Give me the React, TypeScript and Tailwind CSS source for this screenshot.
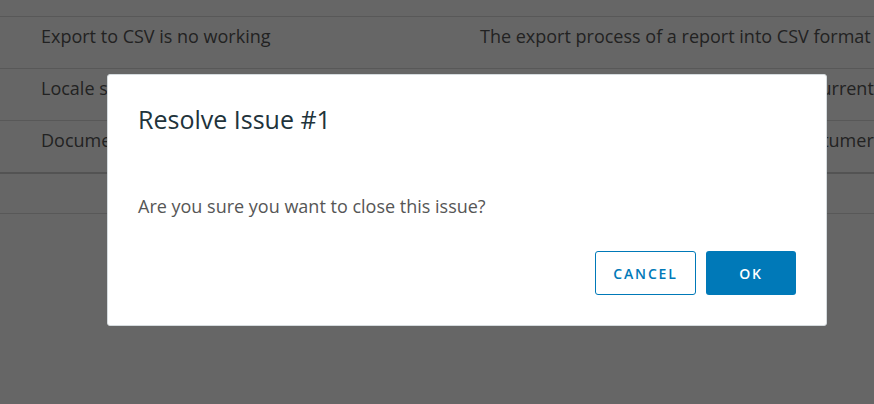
import React from "react";

const rows = [
  {
    title: "Export to CSV is no working",
    description: "The export process of a report into CSV format fails",
  },
  {
    title: "Locale settings are ignored",
    description: "Changing the locale doesn't update the current",
  },
  {
    title: "Documentation is missing",
    description: "There is no documentation for a new costumer portal",
  },
];

const App = () => {
  return (
    <div className="relative h-[404px] w-[874px] overflow-hidden bg-white font-['Open_Sans',sans-serif] text-[#565656]">
      {/* Issues table behind the dialog */}
      <div className="pt-[16px]">
        {rows.map((row) => (
          <div key={row.title} className="flex h-[52px] border-t border-[#dcdcdc] pt-[7px] text-[18px] leading-6">
            <div className="w-[480px] shrink-0 pl-[41px] whitespace-nowrap">{row.title}</div>
            <div className="whitespace-nowrap">{row.description}</div>
          </div>
        ))}
        <div className="h-[42px] border-t-2 border-b border-t-[#cfcfcf] border-b-[#dcdcdc]" />
      </div>

      {/* Backdrop + modal */}
      <div className="fixed inset-0 bg-black/60">
        <div className="ml-[107px] mt-[74px] flex h-[252px] w-[720px] flex-col rounded-[3px] border border-[#d5dbde] bg-white pl-[30px] pr-[30px] pb-[30px]">
          <h2 className="mt-[28px] text-[25px] leading-8 text-[#21333b]">Resolve Issue #1</h2>
          <p className="mt-[59px] text-[18px] leading-6 text-[#565656]">Are you sure you want to close this issue?</p>
          <div className="mt-auto flex justify-end gap-[10px]">
            <button className="h-[44px] w-[101px] rounded-[3px] border border-[#0079b8] bg-white text-[14px] font-semibold tracking-[0.13em] text-[#0079b8]">
              CANCEL
            </button>
            <button className="h-[44px] w-[90px] rounded-[3px] bg-[#0079b8] text-[14px] font-semibold tracking-[0.13em] text-white">
              OK
            </button>
          </div>
        </div>
      </div>
    </div>
  );
};

export default App;
